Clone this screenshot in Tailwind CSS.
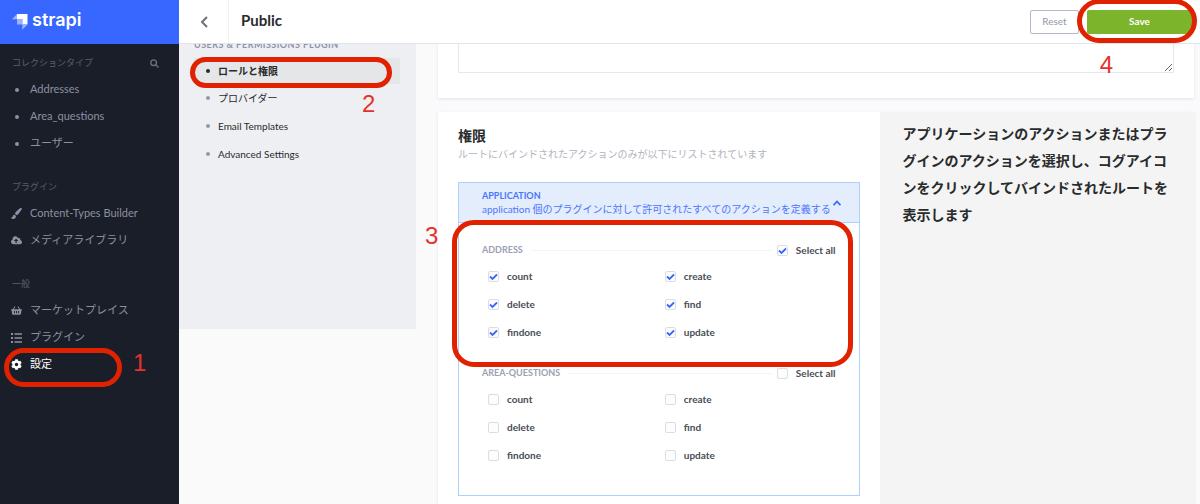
<!DOCTYPE html>
<html lang="ja">
    <head>
        <meta charset="utf-8">
        <title>Public</title>
        <script src="https://cdn.jsdelivr.net/npm/@tailwindcss/browser@4"></script>
    </head>

    <body class="relative flex h-screen overflow-hidden bg-[#fafafb] font-['Lato','Noto_Sans_CJK_JP',sans-serif] text-[10px] text-[#292b2c]">
        <!-- left menu -->
        <aside class="w-[179px] shrink-0 bg-[#1a1e28] text-[11px] text-[#8d90a3]">
            <a href="#" class="flex h-11 items-center gap-1 bg-[#3767ff] pl-3 pb-1 text-white">
                <svg class="mt-1 h-4 w-4" viewBox="0 0 16 16">
                    <path d="M5 0h10.500v10.500h-5.200V5.200H5z" fill="#fff"/>
                    <path d="M5 0v5.200H0z" fill="#9bb3ff"/>
                    <path d="M5 5.200h5.300v5.300H5z" fill="#9bb3ff"/>
                    <path d="M10.300 10.500h5.200l-5.200 5.300z" fill="#9bb3ff"/>
                </svg>
                <span class="text-[18px] leading-none font-semibold font-['Inter',sans-serif]">strapi</span>
            </a>
            <nav class="flex flex-col gap-5 pt-[9px]">
                <div>
                    <div class="mb-[3px] flex h-5 items-center justify-between pr-5 pl-3 text-[9px] text-[#5b5f6e]">
                        コレクションタイプ
                        <button type="button" aria-label="検索">
                            <svg class="h-[9px] w-[9px]" viewBox="0 0 16 16" fill="none" stroke="#6b6f7e" stroke-width="2.500"><circle cx="6.500" cy="6.500" r="5"/><path d="M10 10l5 5"/></svg>
                        </button>
                    </div>
                    <a href="#" class="flex h-[27px] items-center gap-[11px] pl-[15px]"><span class="h-1 w-1 rounded-full bg-current"></span>Addresses</a>
                    <a href="#" class="flex h-[27px] items-center gap-[11px] pl-[15px]"><span class="h-1 w-1 rounded-full bg-current"></span>Area_questions</a>
                    <a href="#" class="flex h-[27px] items-center gap-[11px] pl-[15px]"><span class="h-1 w-1 rounded-full bg-current"></span>ユーザー</a>
                </div>
                <div>
                    <div class="mb-[3px] flex h-5 items-center pl-3 text-[9px] text-[#5b5f6e]">プラグイン</div>
                    <a href="#" class="flex h-[27px] items-center gap-2 pl-[11px]">
                        <svg class="h-[11px] w-[11px]" viewBox="0 0 512 512" fill="currentColor"><path d="M167 309c-57 1-90 40-90 92 0 42-36 56-77 26 9 61 50 85 101 85 78 0 127-52 127-130v-8zM457 0c-15 0-29 7-40 16C213 199 192 211 192 265c0 14 3 27 9 39l66 24c61-9 95-47 233-268 7-14 12-20 12-27 0-20-18-33-55-33z"/></svg>
                        Content-Types Builder
                    </a>
                    <a href="#" class="flex h-[27px] items-center gap-2 pl-[11px]">
                        <svg class="h-[11px] w-[11px]" viewBox="0 0 640 512" fill="currentColor"><path d="M538 227a96 96 0 0 0-135-115A160 160 0 0 0 96 200 144 144 0 0 0 144 480h368a128 128 0 0 0 26-253zM394 288h-66v112h-64V288h-66c-14 0-21-17-11-27l98-98c6-7 16-7 22 0l98 98c10 10 3 27-11 27z"/></svg>
                        メディアライブラリ
                    </a>
                </div>
                <div>
                    <div class="mb-[3px] flex h-5 items-center pl-3 text-[9px] text-[#5b5f6e]">一般</div>
                    <a href="#" class="flex h-[27px] items-center gap-2 pl-[11px]">
                        <svg class="h-[11px] w-[11px]" viewBox="0 0 576 512" fill="currentColor" fill-rule="evenodd"><path d="M576 216v16c0 13-11 24-24 24h-8l-26 182c-3 24-23 42-47 42H105c-24 0-44-18-47-42L32 256h-8c-13 0-24-11-24-24v-16c0-13 11-24 24-24h67L195 37l38 28-86 127h282L343 65l38-28 104 155h67c13 0 24 11 24 24zM312 392V280h-48v112c0 30 48 30 48 0zm112 0V280h-48v112c0 30 48 30 48 0zm-224 0V280h-48v112c0 30 48 30 48 0z"/></svg>
                        マーケットプレイス
                    </a>
                    <a href="#" class="flex h-[27px] items-center gap-2 pl-[11px]">
                        <svg class="h-[11px] w-[11px]" viewBox="0 0 11 11" fill="currentColor"><path d="M0 1h2v2H0zM0 5h2v2H0zM0 9h2v2H0zM3.500 1.300H11v1.400H3.500zM3.500 5.300H11v1.400H3.500zM3.500 9.300H11v1.400H3.500z"/></svg>
                        プラグイン
                    </a>
                    <a href="#" class="flex h-[27px] items-center gap-2 pl-[11px] text-white">
                        <svg class="h-[11px] w-[11px]" viewBox="0 0 512 512" fill="currentColor"><path d="M487 316l-42-25a192 192 0 0 0 0-70l42-25c5-3 7-9 6-14a246 246 0 0 0-55-94c-4-4-10-5-15-3l-42 25a187 187 0 0 0-61-35V26c0-6-4-11-10-12a250 250 0 0 0-108 0c-6 1-10 6-10 12v49c-22 8-43 20-61 35L89 85c-5-3-11-2-15 3a246 246 0 0 0-55 94c-1 5 1 11 6 14l42 25a192 192 0 0 0 0 70l-42 25c-5 3-7 9-6 14 11 35 30 67 55 94 4 4 10 5 15 3l42-25c18 15 39 27 61 35v49c0 6 4 11 10 12 35 8 72 8 108 0 6-1 10-6 10-12v-49c22-8 43-20 61-35l42 25c5 3 11 2 15-3 25-27 44-59 55-94 1-5-1-11-6-14zM256 336a80 80 0 1 1 0-160 80 80 0 0 1 0 160z"/></svg>
                        設定
                    </a>
                </div>
            </nav>
        </aside>

        <div class="flex min-w-0 flex-1 flex-col">
            <!-- top bar -->
            <header class="z-10 flex h-11 shrink-0 items-center border-b border-[#e4e5e9] bg-white pr-2">
                <button type="button" aria-label="戻る" class="flex h-full w-[50px] items-center justify-center border-r border-[#f0f1f3]">
                    <svg class="h-3 w-2" viewBox="0 0 8 12" fill="none" stroke="#6d7078" stroke-width="2"><path d="M7 1L2 6l5 5"/></svg>
                </button>
                <h1 class="pb-0.5 pl-3 text-[15px] font-bold">Public</h1>
                <div class="ml-auto flex gap-2">
                    <button type="button" class="h-6 w-[49px] rounded-xs border border-[#b4b8c8] pb-px text-[#9499ab]">Reset</button>
                    <button type="button" class="h-6 w-[105px] rounded-xs bg-[#7cb52b] pb-px font-bold text-white">Save</button>
                </div>
            </header>

            <div class="flex min-h-0 flex-1 overflow-hidden">
                <!-- settings menu -->
                <nav class="h-[285px] w-[237px] shrink-0 bg-[#eeeff2] pr-4 pl-[15px]">
                    <div class="-mt-[5px] mb-[7px] h-3 text-[9px] leading-3 font-bold tracking-wider text-[#8d93aa]">USERS &amp; PERMISSIONS PLUGIN</div>
                    <a href="#" class="flex h-[26px] items-center gap-2 bg-[#e5e6e8] pl-3 font-bold"><span class="h-1 w-1 rounded-full bg-current"></span>ロールと権限</a>
                    <a href="#" class="flex h-7 items-center gap-2 pl-3"><span class="h-1 w-1 rounded-full bg-[#9096ab]"></span>プロバイダー</a>
                    <a href="#" class="flex h-7 items-center gap-2 pl-3"><span class="h-1 w-1 rounded-full bg-[#9096ab]"></span>Email Templates</a>
                    <a href="#" class="flex h-7 items-center gap-2 pl-3"><span class="h-1 w-1 rounded-full bg-[#9096ab]"></span>Advanced Settings</a>
                </nav>

                <main class="flex min-w-0 flex-1 flex-col gap-3.5 pr-1.5 pl-[22px]">
                    <section class="bg-white px-5 pb-[25px] shadow-[0_1px_3px_#dfe3f0]">
                        <textarea aria-label="説明" class="block h-[29px] w-full resize border border-t-0 border-[#e3e9f3]"></textarea>
                    </section>

                    <section class="flex flex-1 shadow-[0_1px_3px_#dfe3f0]">
                        <div class="w-[58.4%] shrink-0 bg-white px-5 pt-3.5">
                            <h2 class="text-[14px] leading-5 font-bold">権限</h2>
                            <p class="text-[10px] leading-4 text-[#b0b3be]">ルートにバインドされたアクションのみが以下にリストされています</p>

                            <div class="mt-5 border border-[#aed0ff] pb-[26px]">
                                <button type="button" class="flex h-10 w-full items-center justify-between border-b border-[#aed0ff] bg-[#e4edfb] pr-[18px] pl-[23px] text-left text-[#4a75ff]">
                                    <span class="whitespace-nowrap">
                                        <span class="block text-[9px] leading-3 font-bold">APPLICATION</span>
                                        <span class="block leading-[14px]">application 個のプラグインに対して許可されたすべてのアクションを定義する</span>
                                    </span>
                                    <svg class="h-1.5 w-2 shrink-0" viewBox="0 0 8 6" fill="none" stroke="#3767ff" stroke-width="1.800"><path d="M0.500 5.200L4 1.500 7.500 5.200"/></svg>
                                </button>
                                <div id="permissions" class="flex flex-col gap-[15px] px-[23px] pt-[15px]"></div>
                            </div>
                        </div>
                        <aside class="min-w-0 flex-1 bg-[#f4f4f4] py-2 pr-5 pl-[23px] text-[14px] leading-[27px] font-bold">
                            アプリケーションのアクションまたはプラグインのアクションを選択し、コグアイコンをクリックしてバインドされたルートを表示します
                        </aside>
                    </section>
                </main>
            </div>
        </div>

        <!-- step markers -->
        <div class="absolute top-[348px] left-1 z-20 h-[39px] w-[118px] rounded-[20px] border-5 border-[#e02200]"></div>
        <div class="absolute top-[349px] left-[133px] z-20 text-[24px] leading-7 text-[#e4322b] font-['Liberation_Sans',sans-serif]">1</div>
        <div class="absolute top-[57px] left-[190px] z-20 h-[31px] w-[202px] rounded-2xl border-5 border-[#e02200]"></div>
        <div class="absolute top-[90px] left-[362px] z-20 text-[24px] leading-7 text-[#e4322b] font-['Liberation_Sans',sans-serif]">2</div>
        <div class="absolute top-[220px] left-[452px] z-20 h-[147px] w-[401px] rounded-[22px] border-5 border-[#e02200]"></div>
        <div class="absolute top-[222px] left-[425px] z-20 text-[24px] leading-7 text-[#e4322b] font-['Liberation_Sans',sans-serif]">3</div>
        <div class="absolute -top-px right-[3px] z-20 h-11 w-[120px] rounded-[22px] border-5 border-[#e02200]"></div>
        <div class="absolute top-[51px] right-[87px] z-20 text-[24px] leading-7 text-[#e4322b] font-['Liberation_Sans',sans-serif]">4</div>

        <script>
            const groups = [
                { name: 'ADDRESS', checked: true },
                { name: 'AREA-QUESTIONS', checked: false }
            ];
            const actions = ['count', 'create', 'delete', 'find', 'findone', 'update'];

            function checkbox(label, checked) {
                return `<label class="flex items-center gap-2">
                    <span class="relative flex h-[11px] w-[11px]">
                        <input type="checkbox" class="peer h-[11px] w-[11px] appearance-none rounded-xs border border-[#dcdde0] bg-[#fdfdfd]" ${checked ? 'checked' : ''}>
                        <svg class="pointer-events-none absolute inset-0 hidden h-[11px] w-[11px] peer-checked:block" viewBox="0 0 11 11" fill="none" stroke="#3767ff" stroke-width="1.800"><path d="M2 5.500L4.500 8 9 3.500"/></svg>
                    </span>${label}</label>`;
            }

            document.querySelector('#permissions').innerHTML = groups.map(group => `
                <div>
                    <div class="flex h-6 items-center">
                        <span class="text-[9px] font-bold text-[#9a9fb3]">${group.name}</span>
                        <span class="mr-1.5 ml-2 h-px flex-1 bg-[#f3f3f5]"></span>
                        <div class="font-bold text-[#4a4d57]">${checkbox('Select all', group.checked)}</div>
                    </div>
                    <div class="grid grid-cols-2 font-bold text-[#4a4d57]">
                        ${actions.map(action => `<div class="flex h-7 items-center pl-1.5">${checkbox(action, group.checked)}</div>`).join('')}
                    </div>
                </div>`).join('');
        </script>
    </body>
</html>
